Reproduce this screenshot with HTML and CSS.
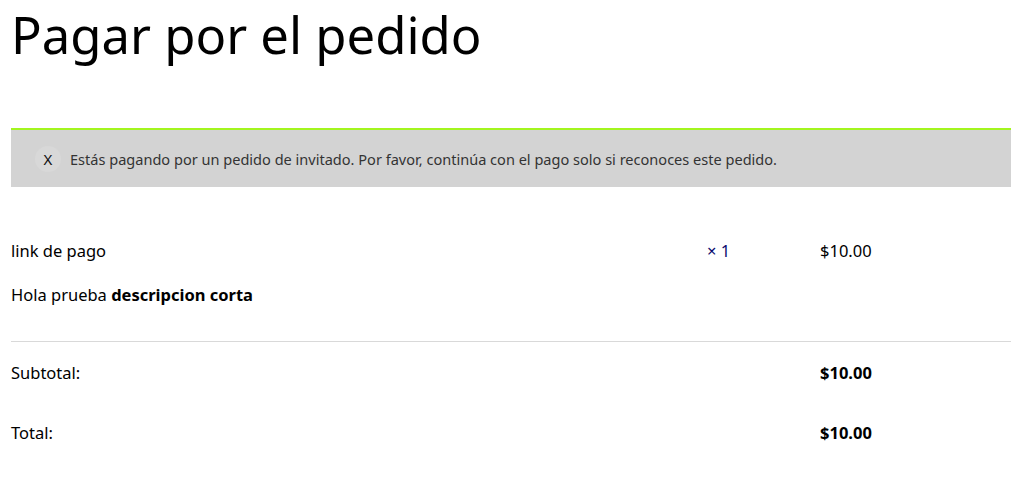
FILE: index.html
```html
<!DOCTYPE html>
<html lang="es">
<head>
<meta charset="utf-8">
<title>Pagar por el pedido</title>
<link rel="stylesheet" href="styles.css">
</head>
<body>
<main class="page">
  <h1 class="title">Pagar por el pedido</h1>
  <div class="notice">
    <span class="notice-close">X</span>
    <span class="notice-text">Estás pagando por un pedido de invitado. Por favor, continúa con el pago solo si reconoces este pedido.</span>
  </div>
  <section class="items">
    <div class="row item-row">
      <div class="cell name">link de pago</div>
      <div class="cell qty">× 1</div>
      <div class="cell price">$10.00</div>
    </div>
    <div class="desc">Hola prueba <strong>descripcion corta</strong></div>
  </section>
  <section class="totals">
    <div class="row total-row">
      <div class="cell label">Subtotal:</div>
      <div class="cell"></div>
      <div class="cell amount">$10.00</div>
    </div>
    <div class="row total-row">
      <div class="cell label">Total:</div>
      <div class="cell"></div>
      <div class="cell amount">$10.00</div>
    </div>
  </section>
</main>
</body>
</html>
```

FILE: styles.css
```css
html, body {
  margin: 0;
  padding: 0;
  background: #ffffff;
}

body {
  font-family: "Noto Sans", "Open Sans", sans-serif;
  color: #000;
}

.page {
  padding: 0 16px 0 11px;
}

.title {
  margin: 0;
  padding-top: 5px;
  font-size: 50.8px;
  font-weight: 400;
  line-height: 60px;
  letter-spacing: 0;
}

.notice {
  margin-top: 63px;
  height: 57px;
  border-top: 2px solid #a3f51f;
  background: #d3d3d3;
  display: flex;
  align-items: center;
  padding-left: 24px;
  gap: 9px;
}

.notice-close {
  width: 26px;
  height: 26px;
  border-radius: 50%;
  background: #d8d8d8;
  display: flex;
  align-items: center;
  justify-content: center;
  font-size: 15px;
  color: #111;
}

.notice-text {
  font-size: 14.55px;
  color: #333;
}

.items {
  padding-top: 51px;
  border-bottom: 1px solid #d9d9d9;
  padding-bottom: 34px;
}

.row {
  display: grid;
  grid-template-columns: 696px 113px 1fr;
  align-items: center;
}

.cell {
  font-size: 16.5px;
}

.item-row {
  height: 24px;
}

.qty {
  color: #0a0a6e;
}

.desc {
  margin-top: 21px;
  font-size: 16.5px;
  line-height: 24px;
}

.desc strong {
  font-weight: 700;
}

.totals {
  padding-top: 18px;
}

.total-row {
  height: 24px;
  margin-bottom: 36px;
}

.amount {
  font-weight: 700;
}
```
